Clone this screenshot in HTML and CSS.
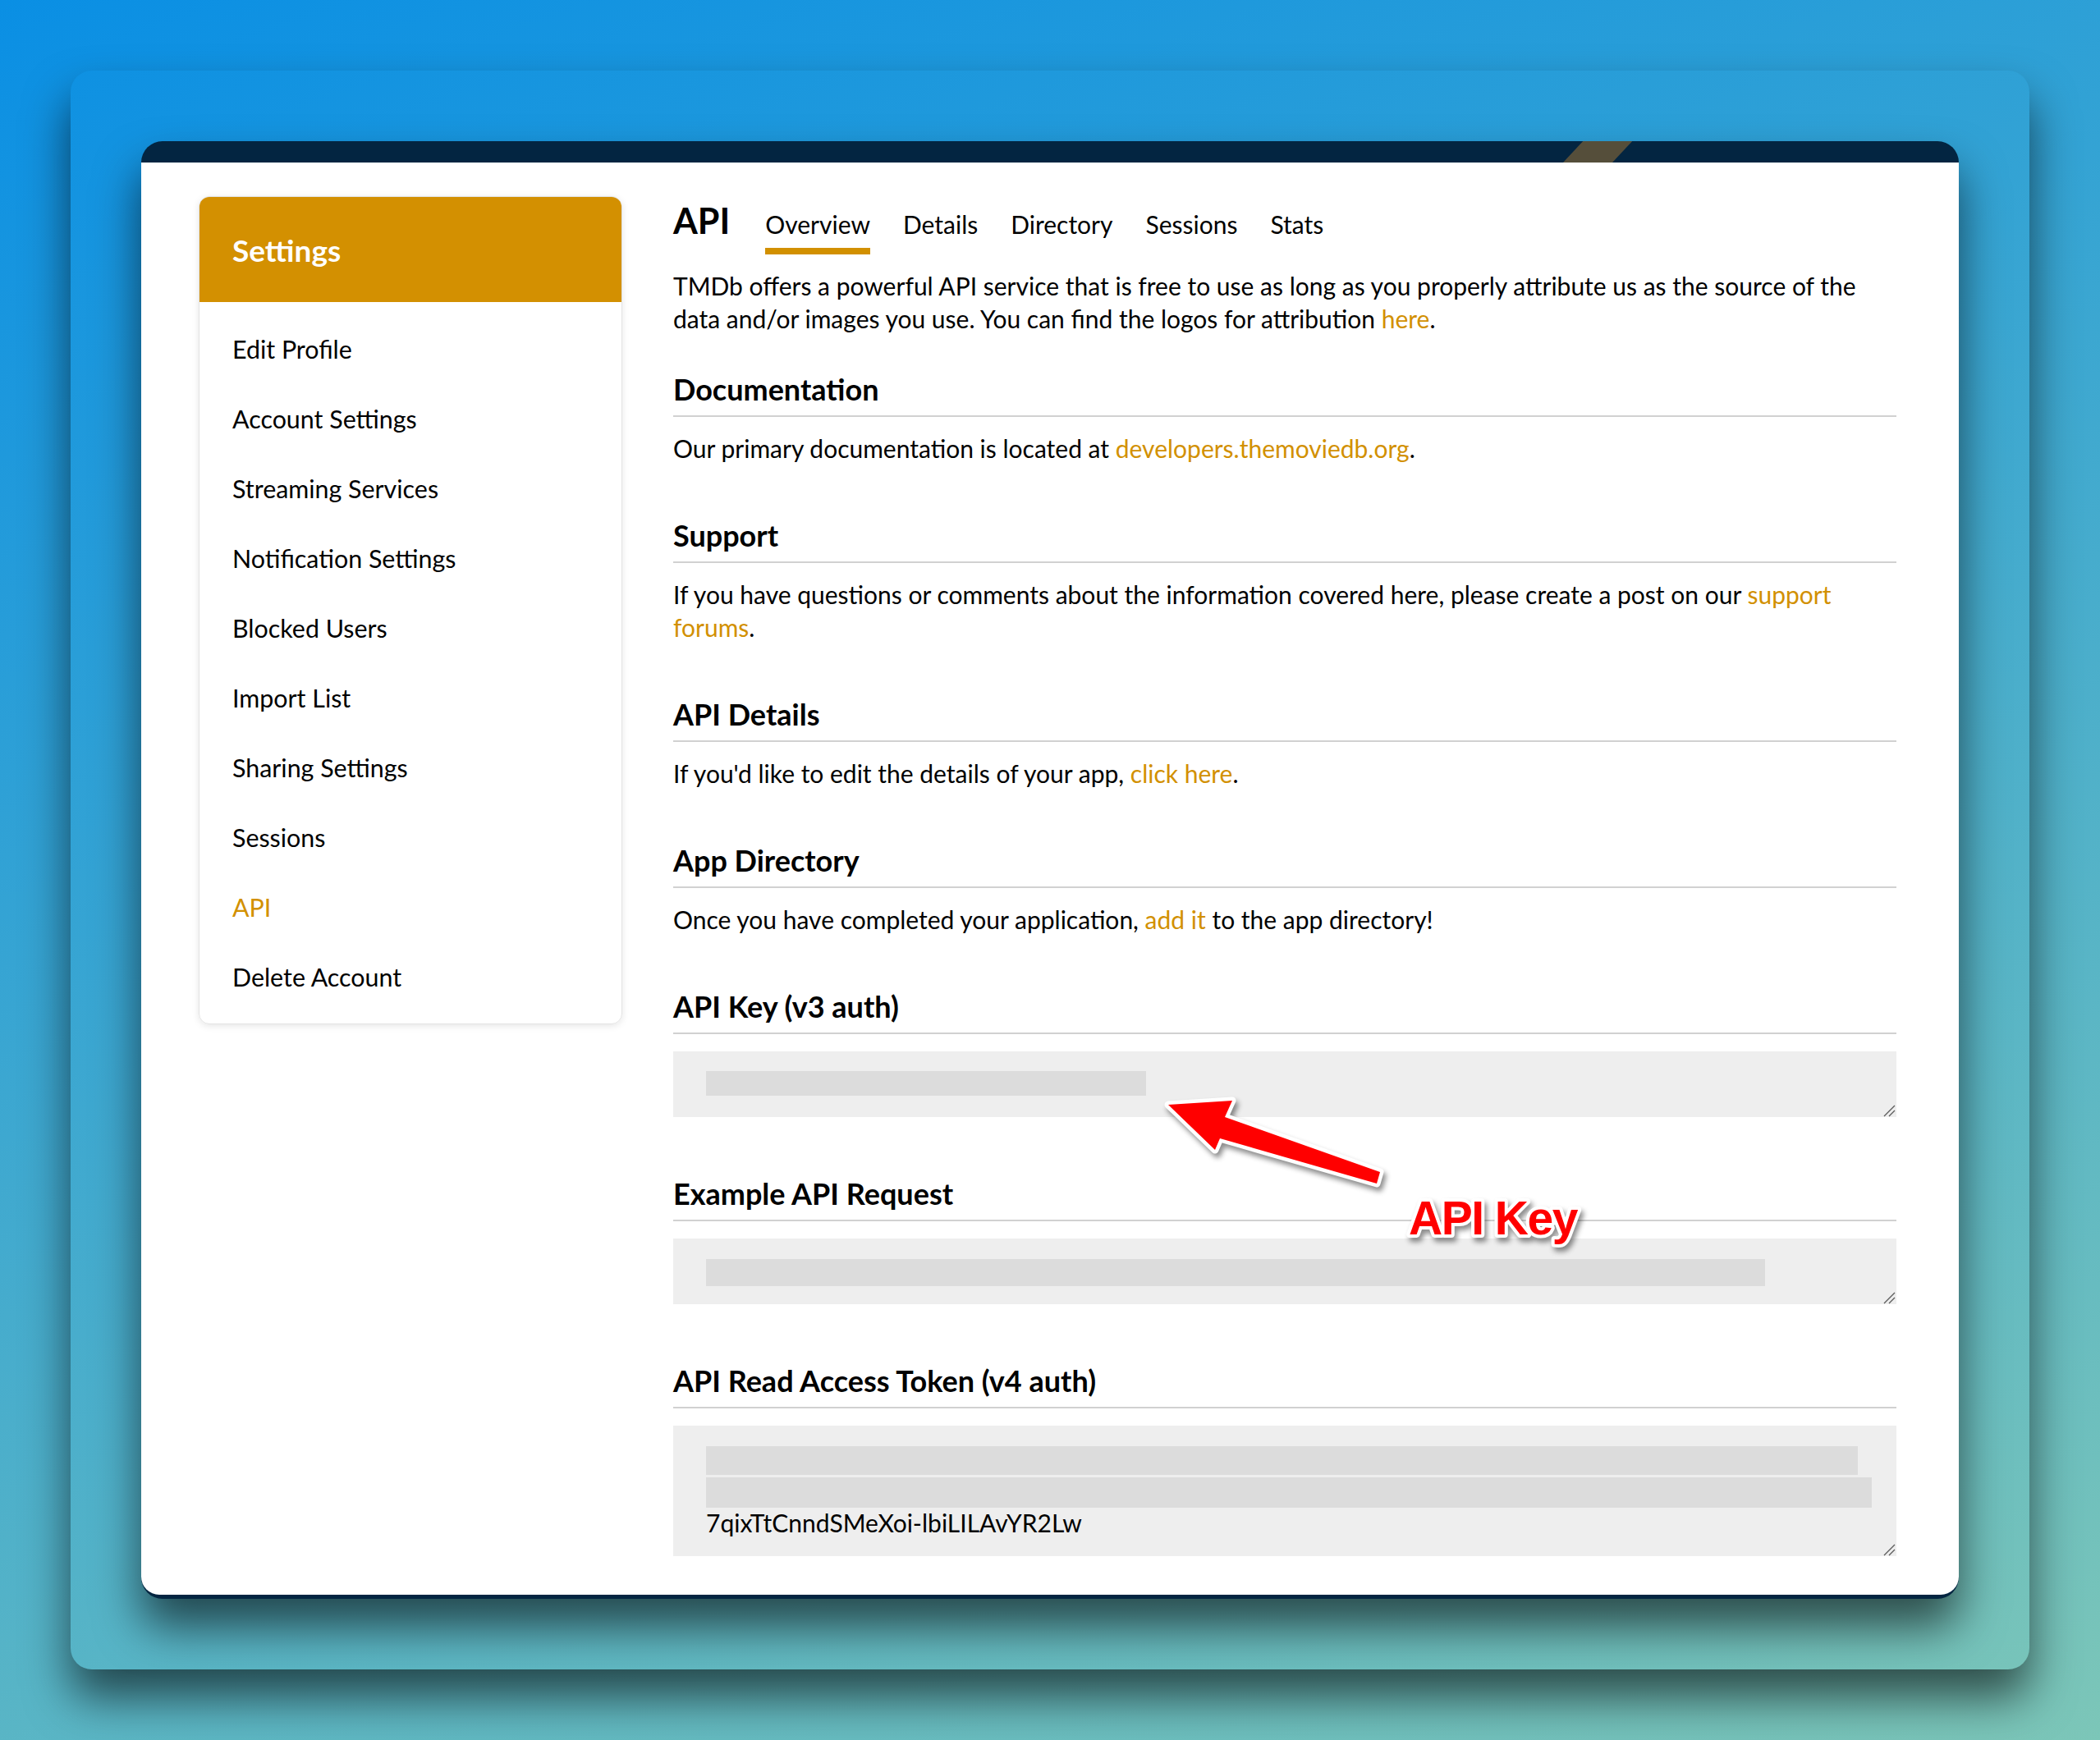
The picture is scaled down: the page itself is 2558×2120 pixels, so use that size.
FILE: index.html
```html
<!DOCTYPE html>
<html lang="en">
<head>
<meta charset="utf-8">
<title>API – Settings</title>
<link rel="stylesheet" href="styles.css">
</head>
<body>
<div class="frame">
  <div class="window">
    <div class="titlebar"></div>
    <div class="page">
      <aside class="sidebar">
        <h2 class="sidebar-title">Settings</h2>
        <ul class="settings-nav">
          <li>Edit Profile</li>
          <li>Account Settings</li>
          <li>Streaming Services</li>
          <li>Notification Settings</li>
          <li>Blocked Users</li>
          <li>Import List</li>
          <li>Sharing Settings</li>
          <li>Sessions</li>
          <li class="active">API</li>
          <li>Delete Account</li>
        </ul>
      </aside>

      <main class="content">
        <div class="title-row">
          <h1>API</h1>
          <nav class="tabs">
            <a class="tab active">Overview</a>
            <a class="tab">Details</a>
            <a class="tab">Directory</a>
            <a class="tab">Sessions</a>
            <a class="tab">Stats</a>
          </nav>
        </div>

        <p class="intro">TMDb offers a powerful API service that is free to use as long as you properly attribute us as the source of the<br>data and/or images you use. You can find the logos for attribution <a>here</a>.</p>

        <section class="block first">
          <h3>Documentation</h3>
          <p>Our primary documentation is located at <a>developers.themoviedb.org</a>.</p>
        </section>

        <section class="block">
          <h3>Support</h3>
          <p>If you have questions or comments about the information covered here, please create a post on our <a>support</a><br><a>forums</a>.</p>
        </section>

        <section class="block">
          <h3>API Details</h3>
          <p>If you'd like to edit the details of your app, <a>click here</a>.</p>
        </section>

        <section class="block">
          <h3>App Directory</h3>
          <p>Once you have completed your application, <a>add it</a> to the app directory!</p>
        </section>

        <section class="block code-block">
          <h3>API Key (v3 auth)</h3>
          <div class="code-box">
            <span class="redact r-key"></span>
            <svg class="grip" viewBox="0 0 16 16"><path d="M1 15 L14 2 M7 15 L14 8"/></svg>
          </div>
        </section>

        <section class="block code-block">
          <h3>Example API Request</h3>
          <div class="code-box">
            <span class="redact r-req"></span>
            <svg class="grip" viewBox="0 0 16 16"><path d="M1 15 L14 2 M7 15 L14 8"/></svg>
          </div>
        </section>

        <section class="block code-block">
          <h3>API Read Access Token (v4 auth)</h3>
          <div class="code-box tall">
            <span class="redact r-tok1"></span>
            <span class="redact r-tok2"></span>
            <span class="token-tail">7qixTtCnndSMeXoi-lbiLILAvYR2Lw</span>
            <svg class="grip" viewBox="0 0 16 16"><path d="M1 15 L14 2 M7 15 L14 8"/></svg>
          </div>
        </section>
      </main>
    </div>

    <svg class="callout" viewBox="0 0 2214 1776">
      <polygon class="callout-arrow" points="1251,1174 1329,1169 1320,1189 1509,1256 1505,1270 1314,1215 1308,1229"/>
      <text class="callout-label" x="1544" y="1332">API Key</text>
    </svg>
  </div>
</div>
</body>
</html>
```

FILE: styles.css
```css
* {
  box-sizing: border-box;
}

html,
body {
  margin: 0;
  padding: 0;
}

body {
  width: 2558px;
  height: 2120px;
  overflow: hidden;
  background: linear-gradient(160deg, #0a8fe4 0%, #7cc6b8 100%);
  font-family: "Lato", "Liberation Sans", sans-serif;
  color: #000;
}

/* outer card (transparent, only its shadow shows) */
.frame {
  margin: 86px;
  padding: 86px;
  height: 1948px;
  border-radius: 26px;
  box-shadow: 0 34px 55px rgba(0, 0, 0, 0.6);
}

/* browser window */
.window {
  position: relative;
  height: 1776px;
  display: flex;
  flex-direction: column;
  background: #032541;
  border-radius: 26px;
  box-shadow: 0 34px 55px rgba(0, 0, 0, 0.6);
}

.titlebar {
  position: relative;
  flex: none;
  height: 26px;
}

.titlebar::before {
  content: "";
  position: absolute;
  left: 1732px;
  top: 0;
  width: 60px;
  height: 26px;
  background: #554e3a;
  transform: skewX(-43deg);
  transform-origin: bottom left;
}

.page {
  flex: 1;
  display: flex;
  gap: 62px;
  margin-bottom: 5px;
  padding: 41px 76px 0 70px;
  background: #fff;
  border-radius: 0 0 22px 22px;
}

/* sidebar */
.sidebar {
  flex: none;
  align-self: flex-start;
  width: 516px;
  border: 1px solid #e3e3e3;
  border-radius: 13px;
  overflow: hidden;
  box-shadow: 0 2px 8px rgba(0, 0, 0, 0.1);
}

.sidebar-title {
  margin: 0;
  height: 128px;
  padding: 0 40px;
  display: flex;
  align-items: center;
  background: #d39001;
  color: #fff;
  font-size: 37px;
  font-weight: 700;
}

.settings-nav {
  list-style: none;
  margin: 0;
  padding: 15px 0 14px;
}

.settings-nav li {
  height: 85px;
  line-height: 85px;
  padding-left: 40px;
  font-size: 30.4px;
}

.settings-nav li.active {
  color: #d29000;
}

/* main column */
.content {
  flex: 1;
  min-width: 0;
  padding-top: 8px;
}

.title-row {
  display: flex;
  align-items: baseline;
}

.title-row h1 {
  margin: 0 43px 0 0;
  font-size: 43px;
  line-height: 43px;
  font-weight: 700;
}

.tabs {
  display: flex;
  gap: 40px;
}

.tab {
  color: #000;
  font-size: 30px;
  line-height: 40px;
  padding-bottom: 9px;
  border-bottom: 8px solid transparent;
}

.tab.active {
  border-bottom-color: #d29000;
}

.intro {
  margin: 18px 0 0;
  font-size: 30px;
  line-height: 40px;
}

a {
  color: #d29000;
  text-decoration: none;
}

.block {
  margin-top: 66px;
}

.block.first {
  margin-top: 46px;
}

.block.code-block {
  padding-bottom: 7px;
}

.block h3 {
  margin: 0;
  padding-bottom: 12px;
  border-bottom: 2px solid #d1d1d1;
  font-size: 36px;
  line-height: 40px;
  font-weight: 700;
}

.block p {
  margin: 18px 0 0;
  font-size: 30px;
  line-height: 40px;
}

/* textarea look-alikes */
.code-box {
  position: relative;
  height: 80px;
  margin-top: 21px;
  padding: 24px 40px 0;
  background: #eeeeee;
  font-size: 30px;
  line-height: 37px;
}

.code-box.tall {
  height: 159px;
  padding-top: 25px;
}

.redact {
  display: block;
  background: #dcdcdc;
}

.r-key {
  width: 536px;
  height: 30px;
}

.r-req {
  width: 1290px;
  height: 33px;
  margin-top: 1px;
}

.r-tok1 {
  width: 1403px;
  height: 35px;
}

.r-tok2 {
  width: 1420px;
  height: 37px;
  margin-top: 3px;
}

.token-tail {
  display: block;
}

.grip {
  position: absolute;
  right: 0;
  bottom: 0;
  width: 16px;
  height: 16px;
}

.grip path {
  fill: none;
  stroke: #5a5a5a;
  stroke-width: 1.3;
}

/* annotation */
.callout {
  position: absolute;
  left: 0;
  top: 0;
  width: 2214px;
  height: 1776px;
  pointer-events: none;
  overflow: visible;
}

.callout-arrow {
  fill: #ff0000;
  stroke: #ffffff;
  stroke-width: 9;
  stroke-linejoin: round;
  paint-order: stroke;
  filter: drop-shadow(3px 5px 3px rgba(0, 0, 0, 0.45));
}

.callout-label {
  font-family: "Liberation Sans", Arial, sans-serif;
  font-weight: 700;
  font-size: 57px;
  letter-spacing: -1.5px;
  fill: #ff0000;
  stroke: #ffffff;
  stroke-width: 8;
  stroke-linejoin: round;
  paint-order: stroke;
  filter: drop-shadow(3px 5px 3px rgba(0, 0, 0, 0.45));
}
```
